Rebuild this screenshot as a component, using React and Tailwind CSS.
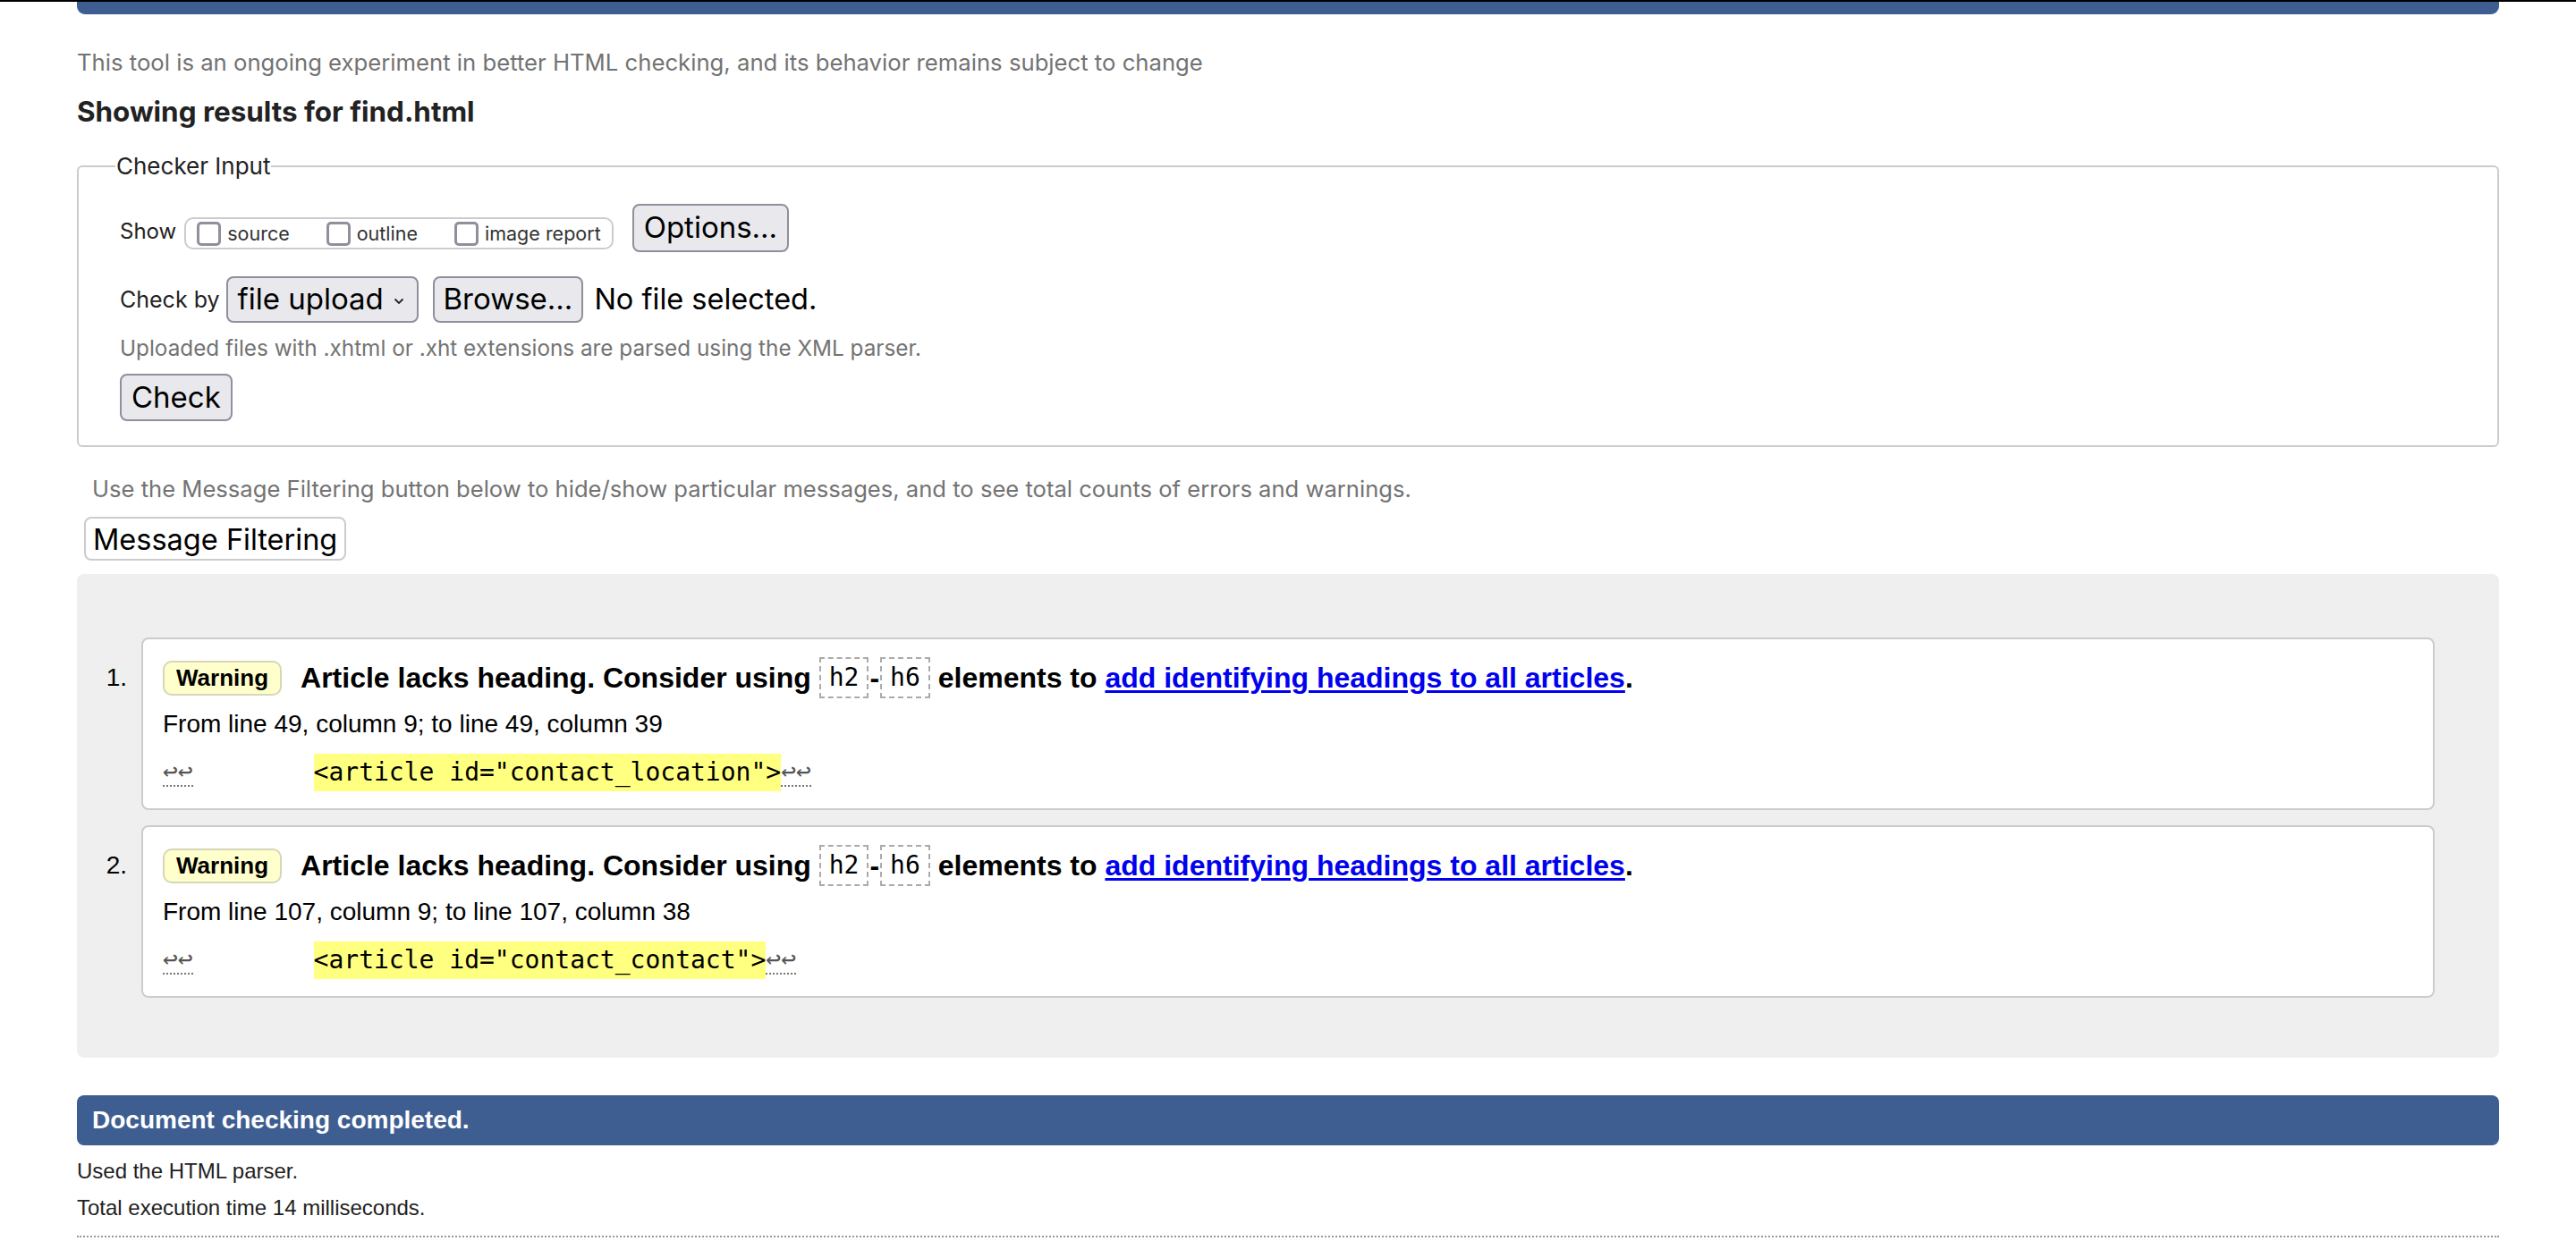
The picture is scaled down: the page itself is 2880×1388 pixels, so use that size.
import React from "react";

const sans = { fontFamily: "Inter, 'Liberation Sans', sans-serif" };
const helv = { fontFamily: "'Liberation Sans', Arial, sans-serif" };
const mono = { fontFamily: "'DejaVu Sans Mono', 'Liberation Mono', monospace" };

const messages = [
  {
    n: 1,
    from: "From line 49, column 9; to line 49, column 39",
    code: '<article id="contact_location">',
  },
  {
    n: 2,
    from: "From line 107, column 9; to line 107, column 38",
    code: '<article id="contact_contact">',
  },
];

const Checkbox = ({ label, last }) => (
  <label className={`flex items-center ${last ? "" : "mr-[41px]"}`}>
    <span className="w-[27px] h-[27px] rounded-[5px] border-[3px] border-[#8f8f9d] bg-white" />
    <span className="ml-[7px] text-[21.5px] leading-[30px] text-[#333]">{label}</span>
  </label>
);

const GrayButton = ({ children, className = "" }) => (
  <button
    className={`flex items-center bg-[#e9e9ed] border-2 border-[#8f8f9d] rounded-[8px] text-[33px] text-black ${className}`}
  >
    {children}
  </button>
);

const Tag = ({ children }) => (
  <code
    className="inline-flex items-center h-[46px] px-[9px] border-2 border-dashed border-[#aaa] text-[28px] font-normal text-black align-middle"
    style={mono}
  >
    {children}
  </code>
);

const Message = ({ m }) => (
  <li className="grid grid-cols-[72px_1fr]">
    <div className="mt-[22px] h-[46px] leading-[46px] text-[28px] text-right pr-[16px] text-black">
      {m.n}.
    </div>
    <div className="border-2 border-[#ccc] rounded-[8px] bg-white pl-[22px] pt-[20px] pb-[21px]">
      <div className="h-[46px] flex items-center whitespace-nowrap">
        <span className="h-[39px] flex items-center px-[13px] bg-[#ffffcc] border-2 border-[#d6d6b8] rounded-[10px] text-[26px] font-bold text-black">
          Warning
        </span>
        <p className="ml-[21px] text-[32px] font-bold text-black flex items-center">
          Article lacks heading. Consider using&nbsp;<Tag>h2</Tag>
          <span className="mx-[1px]">-</span>
          <Tag>h6</Tag>&nbsp;elements to&nbsp;
          <a href="#" className="text-[#0000ee] underline underline-offset-[3px]">
            add identifying headings to all articles
          </a>
          .
        </p>
      </div>
      <p className="mt-[10px] leading-[38px] text-[28px] text-black">{m.from}</p>
      <div className="mt-[16px] h-[38px] flex items-center whitespace-pre text-[28px] text-black" style={mono}>
        <span className="border-b-2 border-dotted border-[#777] text-[#555] leading-[30px]">↩↩</span>
        <span>{"        "}</span>
        <span className="bg-[#ffff80]">{m.code}</span>
        <span className="border-b-2 border-dotted border-[#777] text-[#555] leading-[30px]">↩↩</span>
      </div>
    </div>
  </li>
);

export default function App() {
  return (
    <div className="w-full h-[1388px] overflow-hidden bg-white" style={sans}>
      <div className="h-[2px] bg-black" />
      <div className="px-[86px]">
        <div className="h-[14px] bg-[#3e5e92] rounded-b-[9px]" />

        <p className="mt-[39px] text-[25.7px] leading-[30px] text-[#737373]">
          This tool is an ongoing experiment in better HTML checking, and its behavior remains subject to change
        </p>
        <h2 className="mt-[22px] text-[31.4px] leading-[36px] font-bold text-[#222]">
          Showing results for find.html
        </h2>

        <fieldset className="mt-[28px] border-2 border-[#ccc] rounded-[6px] pl-[46px] pt-[27px] pb-[27px]">
          <legend className="-ml-[5px] px-[1px] text-[26px] leading-[30px] text-[#222]">Checker Input</legend>

          <div className="flex items-start">
            <span className="mt-[16px] text-[24px] leading-[30px] text-[#222]">Show</span>
            <div className="mt-[15px] ml-[9px] h-[36px] flex items-center border-2 border-[#ccc] rounded-[10px] pl-[12px] pr-[12px]">
              <Checkbox label="source" />
              <Checkbox label="outline" />
              <Checkbox label="image report" last />
            </div>
            <GrayButton className="ml-[21px] h-[54px] px-[11px]">Options...</GrayButton>
          </div>

          <div className="mt-[27px] flex items-center">
            <span className="text-[25px] leading-[30px] text-[#222]">Check by</span>
            <GrayButton className="ml-[7px] h-[52px] w-[215px] pl-[11px] pr-[14px] justify-between">
              <span>file upload</span>
              <svg width="12" height="8" viewBox="0 0 12 8" className="mt-[4px]">
                <polyline points="1.5,1.5 6,6 10.5,1.5" fill="none" stroke="#222" strokeWidth="1.8" />
              </svg>
            </GrayButton>
            <GrayButton className="ml-[16px] h-[52px] px-[10px]">Browse...</GrayButton>
            <span className="ml-[12px] text-[32.5px] text-black">No file selected.</span>
          </div>

          <p className="mt-[13px] text-[24.3px] leading-[30px] text-[#737373]">
            Uploaded files with .xhtml or .xht extensions are parsed using the XML parser.
          </p>

          <GrayButton className="mt-[14px] h-[53px] px-[11px]">Check</GrayButton>
        </fieldset>

        <p className="mt-[32px] pl-[17px] text-[25.6px] leading-[30px] text-[#737373]">
          Use the Message Filtering button below to hide/show particular messages, and to see total counts of errors and warnings.
        </p>
        <button className="mt-[16px] ml-[8px] h-[49px] px-[8px] bg-white border-2 border-[#ccc] rounded-[8px] text-[32.5px] text-black">
          Message Filtering
        </button>

        <div className="mt-[15px] bg-[#efefef] rounded-[8px] pt-[71px] pb-[67px] pr-[72px]" style={helv}>
          <ol className="flex flex-col gap-[17px]">
            {messages.map((m) => (
              <Message key={m.n} m={m} />
            ))}
          </ol>
        </div>

        <div className="mt-[42px] h-[56px] flex items-center pl-[17px] bg-[#3e5e92] rounded-[8px] text-white text-[28px] font-bold" style={helv}>
          Document checking completed.
        </div>
        <div style={helv} className="text-[24px] leading-[32px] text-[#222]">
          <p className="mt-[13px]">Used the HTML parser.</p>
          <p className="mt-[9px]">Total execution time 14 milliseconds.</p>
        </div>
        <div className="mt-[15px] border-t-2 border-dotted border-[#999]" />
      </div>
    </div>
  );
}
